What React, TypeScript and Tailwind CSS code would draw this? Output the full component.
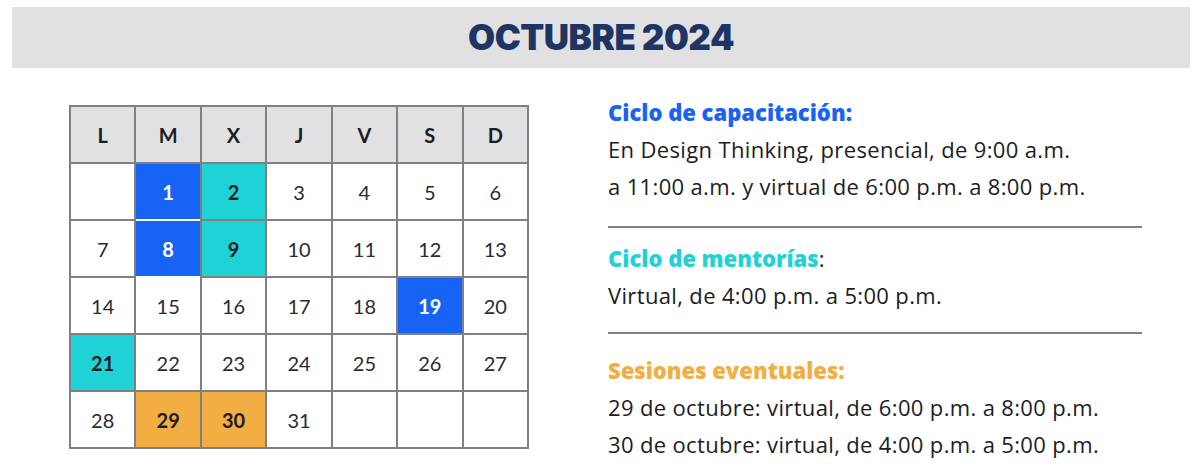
import React from "react";

type Cell = { d?: string; c?: "blue" | "teal" | "orange"; line?: boolean };

const rows: Cell[][] = [
  [{}, { d: "1", c: "blue", line: true }, { d: "2", c: "teal" }, { d: "3" }, { d: "4" }, { d: "5" }, { d: "6" }],
  [{ d: "7" }, { d: "8", c: "blue", line: true }, { d: "9", c: "teal" }, { d: "10" }, { d: "11" }, { d: "12" }, { d: "13" }],
  [{ d: "14" }, { d: "15" }, { d: "16" }, { d: "17" }, { d: "18" }, { d: "19", c: "blue" }, { d: "20" }],
  [{ d: "21", c: "teal" }, { d: "22" }, { d: "23" }, { d: "24" }, { d: "25" }, { d: "26" }, { d: "27" }],
  [{ d: "28" }, { d: "29", c: "orange" }, { d: "30", c: "orange" }, { d: "31" }, {}, {}, {}],
];

const days = ["L", "M", "X", "J", "V", "S", "D"];

function cellClass(c?: Cell["c"]) {
  if (c === "blue") return "bg-[#1763f5] text-white font-bold";
  if (c === "teal") return "bg-[#1fd2d6] text-[#1c1c24] font-bold";
  if (c === "orange") return "bg-[#f2ae42] text-[#1c1c24] font-bold";
  return "bg-white text-[#2a2a33]";
}

export default function App() {
  return (
    <div className="w-[1200px] h-[474px] bg-white font-['Lato','Noto_Sans',sans-serif] overflow-hidden">
      <div className="pt-[7px] pl-[12px] pr-[10px]">
        <div className="h-[61px] bg-[#e1e1e3] flex items-center justify-center">
          <h1 className="text-[35px] font-black text-[#1e3563] tracking-[-0.5px] font-['Inter',sans-serif] leading-none">
            OCTUBRE 2024
          </h1>
        </div>
      </div>
      <div className="flex pl-[69px] pt-[37px]">
        <div className="w-[460px] h-[344px] shrink-0 bg-[#808080] p-[2px] grid grid-cols-7 grid-rows-6 gap-[2px] text-[20px]">
          {days.map((d) => (
            <div key={d} className="bg-[#e1e1e3] font-bold text-[#1c1c24] flex items-center justify-center">
              {d}
            </div>
          ))}
          {rows.flat().map((cell, k) => (
            <div
              key={k}
              className={`flex items-center justify-center ${cellClass(cell.c)} ${
                cell.line ? "shadow-[0_2px_0_0_#ffffff]" : ""
              }`}
            >
              {cell.d ?? ""}
            </div>
          ))}
        </div>
        <div className="ml-[79px] w-[534px] text-[22px] tracking-[0.35px] text-[#1c1c24] -mt-[11px] font-['Open_Sans',sans-serif]">
          <div className="leading-[37px]">
            <div className="font-extrabold tracking-normal text-[#1763f5]">Ciclo de capacitación:</div>
            <div>En Design Thinking, presencial, de 9:00 a.m.</div>
            <div>a 11:00 a.m. y virtual de 6:00 p.m. a 8:00 p.m.</div>
          </div>
          <div className="mt-[21px] h-[2px] bg-[#808080]" />
          <div className="leading-[37px] mt-[12px]">
            <div className="font-extrabold tracking-normal">
              <span className="text-[#1fd2d6]">Ciclo de mentorías</span>
              <span className="font-normal">:</span>
            </div>
            <div>Virtual, de 4:00 p.m. a 5:00 p.m.</div>
          </div>
          <div className="mt-[18px] h-[2px] bg-[#808080]" />
          <div className="leading-[37px] mt-[18px]">
            <div className="font-extrabold tracking-normal text-[#f2ae42]">Sesiones eventuales:</div>
            <div>29 de octubre: virtual, de 6:00 p.m. a 8:00 p.m.</div>
            <div>30 de octubre: virtual, de 4:00 p.m. a 5:00 p.m.</div>
          </div>
        </div>
      </div>
    </div>
  );
}
